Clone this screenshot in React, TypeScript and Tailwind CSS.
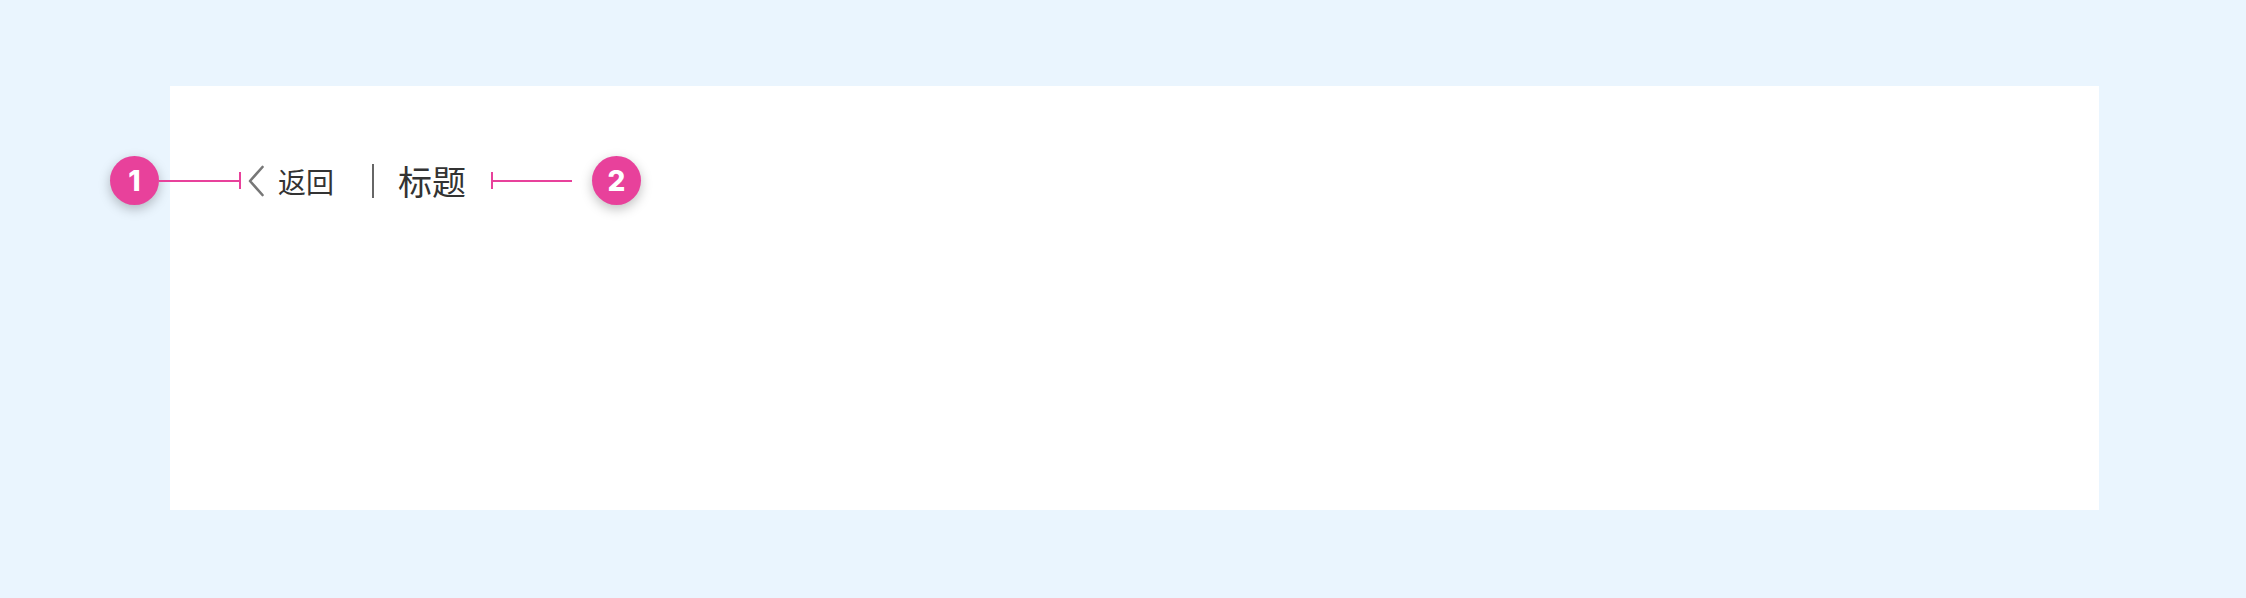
export default function App() {
  return (
    <div className="min-h-[598px] w-[2246px] bg-[#eaf5fe] pl-[170px] pt-[86px] pb-[88px] font-['Noto_Sans_CJK_SC','Noto_Sans',sans-serif]">
      <div className="relative h-[424px] w-[1929px] bg-white">
        {/* page header */}
        <div className="flex items-center pl-[77px] pt-[78px]">
          <button className="flex items-center text-[#333]">
            <svg width="18" height="32" viewBox="0 0 18 32" fill="none" className="mr-[13px]">
              <polyline points="15.5,2 3,16 15.5,30" stroke="#777" strokeWidth="2.6" strokeLinecap="round" strokeLinejoin="round" />
            </svg>
            <span className="text-[28px] leading-none">返回</span>
          </button>
          <div className="ml-[38px] h-[34px] w-[2px] bg-[#666]" />
          <h1 className="ml-[24px] text-[34px] leading-none text-[#333]">标题</h1>
        </div>

        {/* annotation 1 */}
        <div className="absolute left-[-60px] top-[70px] flex items-center">
          <div className="flex h-[49px] w-[49px] items-center justify-center rounded-full bg-[#e8419b] text-[28px] font-extrabold text-white shadow-[0_4px_12px_rgba(0,0,0,0.25)] font-['Inter',sans-serif]">
            1
          </div>
          <div className="h-[2px] w-[80px] bg-[#e8419b]" />
          <div className="h-[17px] w-[2px] bg-[#e8419b]" />
        </div>

        {/* annotation 2 */}
        <div className="absolute left-[321px] top-[70px] flex items-center">
          <div className="h-[17px] w-[2px] bg-[#e8419b]" />
          <div className="h-[2px] w-[79px] bg-[#e8419b]" />
          <div className="ml-[20px] flex h-[49px] w-[49px] items-center justify-center rounded-full bg-[#e8419b] text-[28px] font-extrabold text-white shadow-[0_4px_12px_rgba(0,0,0,0.25)] font-['Inter',sans-serif]">
            2
          </div>
        </div>
      </div>
    </div>
  );
}
